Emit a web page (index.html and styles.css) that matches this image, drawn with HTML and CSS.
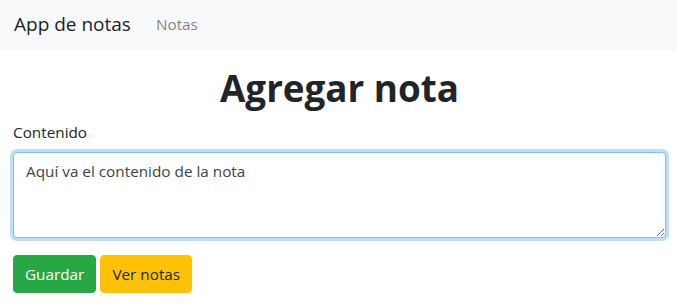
FILE: index.html
```html
<!DOCTYPE html>
<html lang="es">
<head>
<meta charset="utf-8">
<title>App de notas</title>
<link rel="stylesheet" href="styles.css">
</head>
<body>
<nav class="navbar">
  <a class="brand" href="#">App de notas</a>
  <a class="nav-link" href="#">Notas</a>
</nav>
<main class="container">
  <h1 class="title">Agregar nota</h1>
  <form class="form">
    <div class="form-group">
      <label class="label" for="contenido">Contenido</label>
      <textarea id="contenido" class="form-control" rows="3">Aquí va el contenido de la nota</textarea>
    </div>
    <div class="actions">
      <button type="button" class="btn btn-success">Guardar</button>
      <button type="button" class="btn btn-warning">Ver notas</button>
    </div>
  </form>
</main>
</body>
</html>
```
FILE: styles.css
```css
* { box-sizing: border-box; }
body {
  margin: 0;
  font-family: "Open Sans", "Noto Sans", sans-serif;
  font-size: 15.3px;
  line-height: 24px;
  color: #212529;
  background: #fff;
}
.navbar {
  display: flex;
  align-items: center;
  height: 50px;
  padding: 0 14px 2px;
  background: #f8f9fa;
}
.brand {
  font-size: 19px;
  line-height: 30px;
  color: rgba(0,0,0,.9);
  text-decoration: none;
  margin-right: 25px;
}
.nav-link {
  font-size: 15.3px;
  color: rgba(0,0,0,.5);
  text-decoration: none;
}
.container {
  padding: 0 11px 0 13px;
}
.title {
  margin: 14px 0 8px;
  font-size: 36.8px;
  line-height: 48px;
  font-weight: 700;
  text-align: center;
}
.form-group {
  margin-bottom: 17px;
}
.label {
  display: inline-block;
  margin-bottom: 8px;
}
.form-control {
  display: block;
  width: 100%;
  height: 86px;
  padding: 6px 12px;
  font: inherit;
  line-height: 24px;
  color: #3d4349;
  border: 1px solid #80bdff;
  border-radius: 4px;
  box-shadow: 0 0 0 3px rgba(0,123,255,.25);
  outline: 0;
  resize: vertical;
}
.actions {
  display: flex;
  gap: 4px;
}
.btn {
  font: inherit;
  line-height: 24px;
  height: 38px;
  padding: 6px 11px;
  border: 1px solid transparent;
  border-radius: 4px;
  cursor: pointer;
}
.btn-success {
  background: #28a745;
  border-color: #28a745;
  color: #fff;
}
.btn-warning {
  background: #ffc107;
  border-color: #ffc107;
  color: #212529;
}
```
